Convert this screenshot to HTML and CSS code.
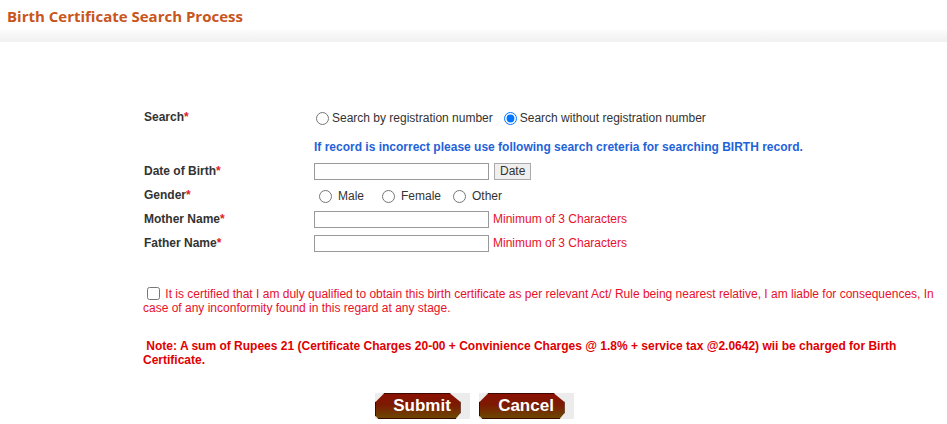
FILE: index.html
```html
<!DOCTYPE html>
<html lang="en">
<head>
  <meta charset="UTF-8">
  <title>Birth Certificate Search Process</title>
  <link rel="stylesheet" href="styles.css">
</head>
<body>
  <div class="header">
    <h1>Birth Certificate Search Process</h1>
  </div>

  <form class="search-form" onsubmit="return false;">
    <div class="grid">
      <div class="label">Search<span class="req">*</span></div>
      <div class="field search-opts">
        <label class="opt"><input type="radio" name="mode"> Search by registration number</label>
        <label class="opt"><input type="radio" name="mode" checked> Search without registration number</label>
      </div>

      <div class="label"></div>
      <div class="field info">If record is incorrect please use following search creteria for searching BIRTH record.</div>

      <div class="label">Date of Birth<span class="req">*</span></div>
      <div class="field">
        <input type="text" class="txt">
        <button type="button" class="date-btn">Date</button>
      </div>

      <div class="label">Gender<span class="req">*</span></div>
      <div class="field gender">
        <label class="g g-male"><input type="radio" name="gender"> Male</label>
        <label class="g g-female"><input type="radio" name="gender"> Female</label>
        <label class="g"><input type="radio" name="gender"> Other</label>
      </div>

      <div class="label">Mother Name<span class="req">*</span></div>
      <div class="field">
        <input type="text" class="txt">
        <span class="err">Minimum of 3 Characters</span>
      </div>

      <div class="label">Father Name<span class="req">*</span></div>
      <div class="field">
        <input type="text" class="txt">
        <span class="err">Minimum of 3 Characters</span>
      </div>
    </div>

    <p class="declare">
      <input type="checkbox" class="chk"> It is certified that I am duly qualified to obtain this birth certificate as per relevant Act/ Rule being nearest relative, I am liable for consequences, In case of any inconformity found in this regard at any stage.
    </p>

    <p class="note">&nbsp;Note: A sum of Rupees 21 (Certificate Charges 20-00 + Convinience Charges @ 1.8% + service tax @2.0642) wii be charged for Birth Certificate.</p>

    <div class="actions">
      <span class="btn-wrap"><button type="submit" class="btn">Submit</button></span>
      <span class="btn-wrap"><button type="reset" class="btn">Cancel</button></span>
    </div>
  </form>
</body>
</html>
```

FILE: styles.css
```css
body {
  margin: 0;
  font-family: "Liberation Sans", Arial, sans-serif;
  font-size: 12px;
  color: #333;
  background: #fff;
}
.header {
  height: 30px;
  padding: 0 7px;
  border-bottom: 12px solid #f3f3f3;
  background: #fff;
  position: relative;
}
.header::after {
  content: "";
  position: absolute;
  left: 0;
  right: 0;
  bottom: -12px;
  height: 12px;
  background: linear-gradient(to bottom, #fbfbfb, #f0f0f0);
}
h1 {
  margin: 0;
  padding-top: 6px;
  font-family: "Open Sans", sans-serif;
  font-size: 15px;
  font-weight: 700;
  color: #c8561c;
}
.search-form {
  padding: 63px 12px 0 143px;
}
.grid {
  display: grid;
  grid-template-columns: 171px 1fr;
  grid-template-rows: 24px 30px 24px 24px 24px 24px;
  align-items: center;
}
.label {
  padding-left: 1px;
  font-weight: bold;
  color: #333;
}
.req {
  color: #e02020;
}
.field {
  display: flex;
  align-items: center;
  gap: 4px;
}
.search-opts {
  gap: 0;
  padding-top: 2px;
}
.opt {
  display: inline-flex;
  align-items: center;
  margin-right: 9px;
  font-size: 12px;
  color: #333;
}
.opt input {
  margin: 0 3px 0 2px;
  width: 13px;
  height: 13px;
}
.info {
  align-self: end;
  margin-bottom: 5px;
  color: #1f63d8;
  font-weight: bold;
}
.txt {
  width: 175px;
  height: 17px;
  box-sizing: border-box;
  border: 1px solid #999;
  margin: 0;
  padding: 0 2px;
}
.date-btn {
  height: 17px;
  padding: 0 5px;
  margin: 0 0 0 1px;
  font-family: inherit;
  font-size: 12px;
  color: #333;
  background: #efefef;
  border: 1px solid #aaa;
  border-radius: 0;
}
.gender {
  gap: 0;
  padding-left: 5px;
  padding-top: 2px;
}
.g {
  display: inline-flex;
  align-items: center;
  color: #333;
}
.g-male {
  width: 63px;
}
.g-female {
  width: 71px;
}
.g input {
  margin: 0 6px 0 0;
  width: 13px;
  height: 13px;
}
.err {
  color: #e8102a;
}
.declare {
  margin: 32px 0 0;
  line-height: 14px;
  color: #e8102a;
}
.chk {
  width: 13px;
  height: 13px;
  margin: 0 2px 0 4px;
  vertical-align: -2px;
}
.note {
  margin: 24px 0 0;
  line-height: 14px;
  font-weight: bold;
  color: #e00000;
}
.actions {
  display: flex;
  justify-content: center;
  gap: 9px;
  margin-top: 26px;
  padding-right: 130px;
}
.btn-wrap {
  display: inline-block;
  width: 95px;
  height: 26px;
  background: #ececec;
}
.btn {
  width: 86px;
  height: 26px;
  padding: 0 0 0 9px;
  border: none;
  font-family: "Liberation Sans", Arial, sans-serif;
  font-size: 17px;
  font-weight: bold;
  color: #fff;
  background: linear-gradient(to bottom, #8c1002 0%, #7c1a02 45%, #6b4a00 100%);
  clip-path: polygon(10px 0, calc(100% - 11px) 0, 100% 9px, 100% calc(100% - 6px), calc(100% - 5px) 100%, 4px 100%, 0 calc(100% - 4px), 0 10px);
  box-shadow: inset 0 0 0 1px #3a0a00;
}
```
